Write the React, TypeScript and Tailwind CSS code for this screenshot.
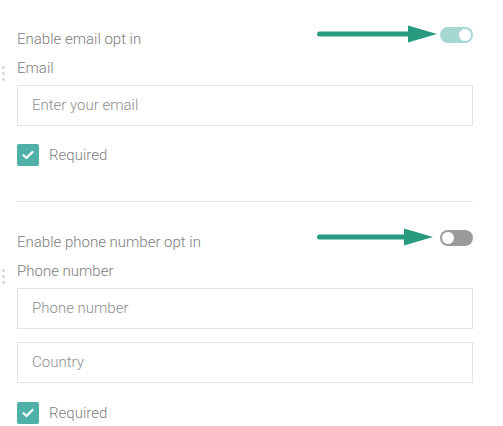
import React from 'react';

const font = { fontFamily: 'Roboto, "Liberation Sans", sans-serif' };

const DragHandle: React.FC = () => (
  <div className="absolute left-[2px] top-[8px] flex flex-col gap-[3px]">
    <span className="block w-[3px] h-[3px] rounded-full bg-[#d6d6d6]" />
    <span className="block w-[3px] h-[3px] rounded-full bg-[#d6d6d6]" />
    <span className="block w-[3px] h-[3px] rounded-full bg-[#d6d6d6]" />
  </div>
);

const Arrow: React.FC<{ tip: number }> = ({ tip }) => (
  <svg className="absolute top-1/2 -translate-y-1/2" style={{ left: 317 }} width={tip - 317} height={18} viewBox={`0 0 ${tip - 317} 18`}>
    <line x1="2.5" y1="9" x2={tip - 317 - 26} y2="9" stroke="#279a80" strokeWidth="5" strokeLinecap="round" />
    <polygon points={`${tip - 317 - 29},0.5 ${tip - 317},9 ${tip - 317 - 29},17.5`} fill="#279a80" />
  </svg>
);

const Toggle: React.FC<{ on: boolean }> = ({ on }) => (
  <div
    className={`w-[33px] h-[16px] rounded-full flex items-center px-[1px] ${
      on ? 'bg-[#a6d7d3] justify-end' : 'bg-[#9b9b9b] justify-start'
    }`}
  >
    <span
      className={`block w-[14px] h-[14px] rounded-full bg-white border ${
        on ? 'border-[#a6d7d3]' : 'border-[#9b9b9b]'
      }`}
    />
  </div>
);

const Field: React.FC<{ placeholder: string }> = ({ placeholder }) => (
  <div className="h-[41px] border border-[#e3e3e3] flex items-center pl-[14px] text-[15px] font-light text-[#8f8f8f]">
    {placeholder}
  </div>
);

const Required: React.FC = () => (
  <div className="flex items-center gap-[10px]">
    <div className="w-[22px] h-[22px] rounded-[2px] bg-[#4fb0a8] flex items-center justify-center">
      <svg width="12" height="10" viewBox="0 0 12 10">
        <path d="M1.5 5.2 L4.5 8 L10.5 2" fill="none" stroke="white" strokeWidth="2.2" strokeLinecap="round" strokeLinejoin="round" />
      </svg>
    </div>
    <span className="text-[15px] font-light text-[#808080]">Required</span>
  </div>
);

const OptRow: React.FC<{ label: string; on: boolean; tip: number }> = ({ label, on, tip }) => (
  <div className="relative flex items-start justify-between h-[20px]">
    <span className="text-[15px] font-light leading-[20px] text-[#7d7d7d]">{label}</span>
    <div className="mt-[-2px]">
      <Toggle on={on} />
    </div>
    <div className="absolute inset-y-0 left-[-17px] w-0">
      <div className="relative h-[12px] mt-[-1px]">
        <Arrow tip={tip} />
      </div>
    </div>
  </div>
);

const FieldLabel: React.FC<{ text: string }> = ({ text }) => (
  <div className="relative">
    <div className="absolute left-[-17px] top-0">
      <DragHandle />
    </div>
    <span className="block text-[15px] font-light leading-[20px] text-[#7d7d7d]">{text}</span>
  </div>
);

export default function App() {
  return (
    <div className="w-[503px] h-[426px] bg-white pl-[17px] pr-[30px] pt-[29px]" style={font}>
      <OptRow label="Enable email opt in" on tip={437} />
      <div className="mt-[9px]">
        <FieldLabel text="Email" />
      </div>
      <div className="mt-[7px]">
        <Field placeholder="Enter your email" />
      </div>
      <div className="mt-[18px]">
        <Required />
      </div>

      <div className="mt-[34px] border-t border-[#e6e6e6]" />

      <div className="mt-[30px]">
        <OptRow label="Enable phone number opt in" on={false} tip={433} />
      </div>
      <div className="mt-[9px]">
        <FieldLabel text="Phone number" />
      </div>
      <div className="mt-[7px]">
        <Field placeholder="Phone number" />
      </div>
      <div className="mt-[13px]">
        <Field placeholder="Country" />
      </div>
      <div className="mt-[19px]">
        <Required />
      </div>
    </div>
  );
}
